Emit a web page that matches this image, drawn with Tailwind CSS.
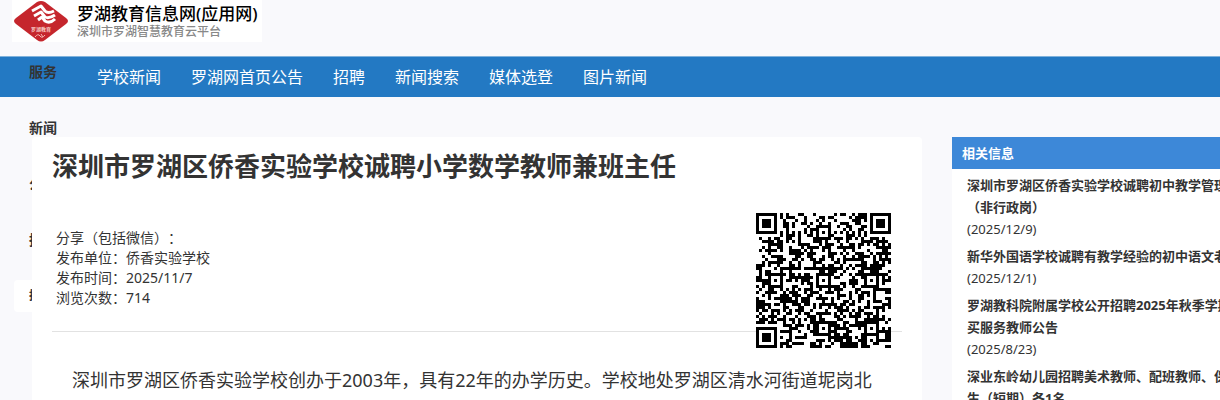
<!DOCTYPE html>
<html lang="zh-CN">
  <head>
    <meta charset="UTF-8" />
    <meta name="viewport" content="width=device-width, initial-scale=1.0" />
    <script src="https://cdn.jsdelivr.net/npm/@tailwindcss/browser@4"></script>
    <title>罗湖教育信息网</title>
  </head>

  <body class="h-screen overflow-hidden bg-[#f9f9fc] font-['Noto_Sans','Noto_Sans_CJK_SC',sans-serif] text-[#333] [text-spacing-trim:space-all]">
    <!-- Header with logo -->
    <header class="h-14 pl-3">
      <a href="#" class="flex h-[42px] w-[250px] bg-white text-black">
        <svg class="h-[42px] w-[58px] shrink-0" viewBox="0 0 58 42" aria-hidden="true">
          <path d="M25 2Q29 0 33 2L54 18Q58 21 54 24L33 40Q29 43 25 40L4 24Q0 21 4 18Z" fill="#c5262d" />
          <g fill="none" stroke="#fff" stroke-width="3" stroke-linejoin="round">
            <path d="M20 11L29 6L33 11Q36 14 42 11" />
            <path d="M22 16L29 12L33 17Q37 19 43 15" />
            <path d="M26 20L30 17L33 21Q38 24 43 19" />
          </g>
          <text x="19" y="31" font-size="5" font-weight="700" fill="#f6c9c4">罗湖教育</text>
          <path d="M23 37Q26 33 28 36T33 35M29 34L31 37" fill="none" stroke="#f3b7b2" stroke-width="1" />
        </svg>
        <span class="ml-[7px] whitespace-nowrap pt-1">
          <span class="block text-[17px] leading-5 font-medium">罗湖教育信息网(应用网)</span>
          <span class="block text-[12px] leading-4 font-medium text-[#888]">深圳市罗湖智慧教育云平台</span>
        </span>
      </a>
    </header>

    <!-- Top navigation -->
    <nav class="flex h-[41px] items-center gap-[30px] border-t border-[#7fb2dc] bg-[#2379c3] pl-[97px] text-base whitespace-nowrap text-white">
      <a href="#">学校新闻</a>
      <a href="#">罗湖网首页公告</a>
      <a href="#">招聘</a>
      <a href="#">新闻搜索</a>
      <a href="#">媒体选登</a>
      <a href="#">图片新闻</a>
    </nav>

    <!-- Side menu, lies over the nav and under the article -->
    <div class="absolute top-14 left-[14px] flex w-32 flex-col gap-6 text-sm leading-8 font-bold">
      <a href="#" class="pl-[15px]">服务</a>
      <a href="#" class="pl-[15px]">新闻</a>
      <a href="#" class="pl-[15px]">公告</a>
      <a href="#" class="pl-[15px]">招聘</a>
      <a href="#" class="rounded bg-white pl-[15px] text-xs leading-8">招生</a>
    </div>

    <main class="relative mt-10 flex items-start gap-[30px] pl-8">
      <!-- Article -->
      <article class="relative min-w-0 flex-1 rounded-t bg-white px-5 pt-[9px] pb-10">
        <h1 class="text-[26px] leading-10 font-bold">深圳市罗湖区侨香实验学校诚聘小学数学教师兼班主任</h1>
        <div class="mt-[42px] border-b border-[#e2e2e2] pb-[23px] pl-1 text-sm leading-5">
          <p>分享（包括微信）：</p>
          <p>发布单位：侨香实验学校</p>
          <p>发布时间：2025/11/7</p>
          <p>浏览次数：714</p>
        </div>
        <svg id="qr" class="absolute top-[76px] right-[31px] h-[135px] w-[135px] bg-white" viewBox="0 0 45 45" shape-rendering="crispEdges" role="img" aria-label="二维码"></svg>
        <p class="mt-8 indent-5 text-lg leading-8">深圳市罗湖区侨香实验学校创办于2003年，具有22年的办学历史。学校地处罗湖区清水河街道坭岗北</p>
      </article>

      <!-- Related news -->
      <aside class="w-[268px] shrink-0 overflow-hidden bg-white">
        <h2 class="bg-[#3d88d8] pl-[10px] text-[13px] leading-8 font-bold text-white">相关信息</h2>
        <ul class="flex flex-col gap-[5px] pt-[5px] pl-[15px] text-[13px] leading-[22px] whitespace-nowrap">
          <li>
            <a href="#" class="font-bold">深圳市罗湖区侨香实验学校诚聘初中教学管理<br />（非行政岗）</a>
            <p>(2025/12/9)</p>
          </li>
          <li>
            <a href="#" class="font-bold">新华外国语学校诚聘有教学经验的初中语文老师</a>
            <p>(2025/12/1)</p>
          </li>
          <li>
            <a href="#" class="font-bold">罗湖教科院附属学校公开招聘2025年秋季学期<br />买服务教师公告</a>
            <p>(2025/8/23)</p>
          </li>
          <li>
            <a href="#" class="font-bold">深业东岭幼儿园招聘美术教师、配班教师、保育<br />生（短期）各1名</a>
          </li>
        </ul>
      </aside>
    </main>

    <script>
      // QR code, 45 x 45 modules
      const size = 45;
      const grid = [];
      let seed = 20251107;
      for (let y = 0; y < size; y++) {
        grid.push([]);
        for (let x = 0; x < size; x++) {
          seed = (seed * 1103515245 + 12345) % 2147483648;
          grid[y].push((seed / 2147483648) < 0.5 ? 1 : 0);
        }
      }
      // timing lines
      for (let i = 0; i < size; i++) {
        grid[6][i] = grid[i][6] = i % 2 ? 0 : 1;
      }
      // rings around a centre: dark where the distance is not in the light list
      function rings(cx, cy, radius, light) {
        for (let y = cy - radius; y <= cy + radius; y++) {
          for (let x = cx - radius; x <= cx + radius; x++) {
            if (x < 0 || y < 0 || x >= size || y >= size) continue;
            const d = Math.max(Math.abs(x - cx), Math.abs(y - cy));
            grid[y][x] = light.includes(d) ? 0 : 1;
          }
        }
      }
      [[3, 3], [41, 3], [3, 41]].forEach(([x, y]) => rings(x, y, 4, [2, 4]));
      [[22, 6], [6, 22], [22, 22], [38, 22], [22, 38], [38, 38]].forEach(([x, y]) => rings(x, y, 2, [1]));

      let d = "";
      grid.forEach((row, y) => row.forEach((on, x) => { if (on) d += `M${x} ${y}h1v1h-1z`; }));
      document.getElementById("qr").innerHTML = `<path d="${d}" fill="#000"/>`;
    </script>
  </body>
</html>
